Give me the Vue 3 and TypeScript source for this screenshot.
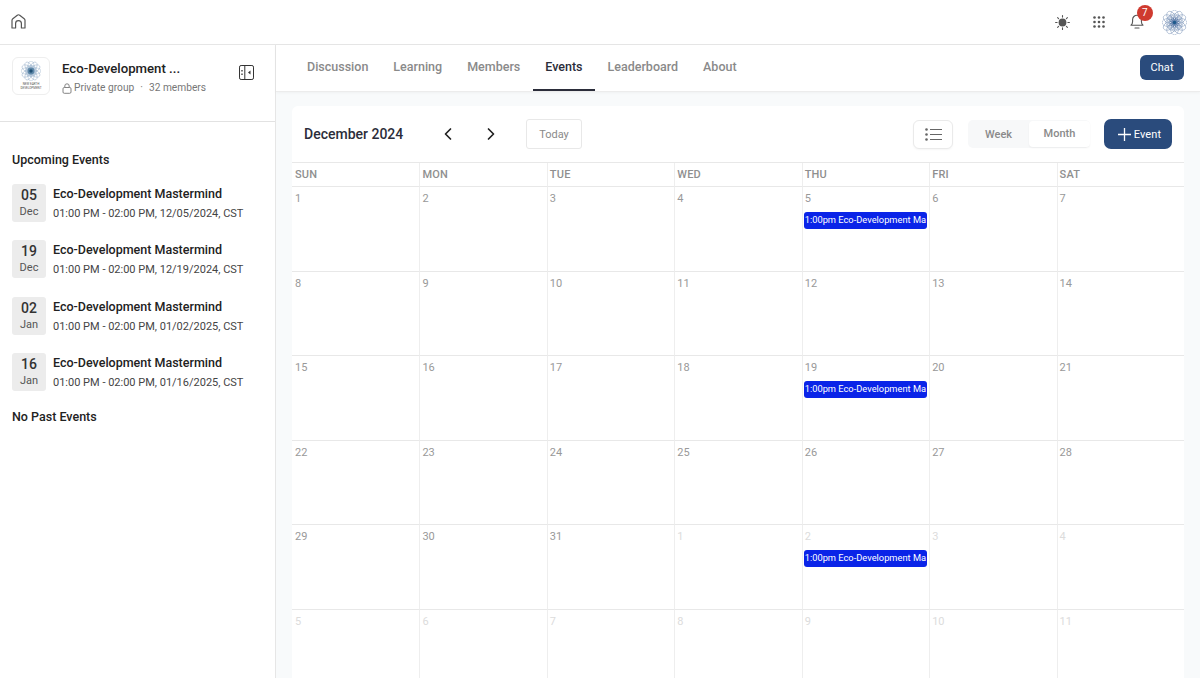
<script setup lang="ts">
const tabs = ['Discussion', 'Learning', 'Members', 'Events', 'Leaderboard', 'About']
const days = ['SUN', 'MON', 'TUE', 'WED', 'THU', 'FRI', 'SAT']
const events = [
  { d: '05', m: 'Dec', t: '01:00 PM - 02:00 PM, 12/05/2024, CST' },
  { d: '19', m: 'Dec', t: '01:00 PM - 02:00 PM, 12/19/2024, CST' },
  { d: '02', m: 'Jan', t: '01:00 PM - 02:00 PM, 01/02/2025, CST' },
  { d: '16', m: 'Jan', t: '01:00 PM - 02:00 PM, 01/16/2025, CST' },
]
interface Cell { n: number; muted: boolean; ev: boolean; key: string }
const cells: Cell[] = []
for (let i = 0; i < 42; i++) {
  const inDec = i < 31
  const n = inDec ? i + 1 : i - 30
  cells.push({ n, muted: !inDec, ev: i === 4 || i === 18 || i === 32, key: 'c' + i })
}
const petals = Array.from({ length: 12 }, (_, i) => i * 30)
</script>

<template>
  <div class="app">
    <header class="top">
      <svg class="home" width="15" height="15" viewBox="0 0 15 15" fill="none" stroke="#555" stroke-width="1.2" stroke-linejoin="round" stroke-linecap="round">
        <path d="M1 14V6.300q0-1 .8-1.600L6.300 1.200q1.200-.9 2.400 0l4.500 3.500q.8.600.8 1.600V14h-3.600V9.500a2.900 2.900 0 0 0-5.800 0V14z" />
      </svg>
      <div class="top-right">
        <svg width="15" height="15" viewBox="0 0 15 15" stroke="#555" stroke-width="1.100" stroke-linecap="round">
          <circle cx="7.500" cy="7.500" r="3.900" fill="#555" stroke="none" />
          <path d="M7.500.6v1.500M7.500 12.900v1.500M.6 7.500h1.500M12.900 7.500h1.500M2.600 2.600l1 1M11.400 11.400l1 1M2.600 12.400l1-1M11.400 3.600l1-1" />
        </svg>
        <svg class="grid-ic" width="12" height="12" viewBox="0 0 12 12" fill="#555">
          <circle cx="1.500" cy="1.500" r="1.300" /><circle cx="6" cy="1.500" r="1.300" /><circle cx="10.500" cy="1.500" r="1.300" />
          <circle cx="1.500" cy="6" r="1.300" /><circle cx="6" cy="6" r="1.300" /><circle cx="10.500" cy="6" r="1.300" />
          <circle cx="1.500" cy="10.500" r="1.300" /><circle cx="6" cy="10.500" r="1.300" /><circle cx="10.500" cy="10.500" r="1.300" />
        </svg>
        <div class="bell">
          <svg width="14" height="15" viewBox="0 0 14 15" fill="none" stroke="#555" stroke-width="1.100" stroke-linecap="round" stroke-linejoin="round">
            <path d="M1 11.200c1.100-.9 1.600-2 1.600-3.700V5.600a4.400 4.400 0 0 1 8.800 0v1.900c0 1.700.5 2.800 1.600 3.700z" />
            <path d="M5 14h4" />
          </svg>
          <span class="badge">7</span>
        </div>
        <svg class="avatar" width="25" height="25" viewBox="-13 -13 26 26" fill="none" stroke="#5b7ba8" stroke-width=".4">
          <ellipse v-for="p in petals" :key="p" cx="0" cy="-7" rx="4" ry="6" :transform="`rotate(${p})`" />
          <ellipse v-for="p in petals" :key="'m' + p" cx="0" cy="-4.500" rx="3" ry="4.500" :transform="`rotate(${p})`" />
          <ellipse v-for="p in petals" :key="'i' + p" cx="0" cy="-2.500" rx="1.600" ry="2.500" :transform="`rotate(${p})`" />
          <circle r="1.800" fill="#1f5a8c" stroke="none" />
        </svg>
      </div>
    </header>
    <div class="body">
      <aside class="side">
        <div class="group">
          <div class="logo">
            <svg width="20" height="20" viewBox="-13 -13 26 26" fill="none" stroke="#7f9dbd" stroke-width=".5">
              <circle r="8" fill="#cfdce8" stroke="none" />
              <ellipse v-for="p in petals" :key="p" cx="0" cy="-6.500" rx="4" ry="6.500" :transform="`rotate(${p})`" />
              <circle r="4.500" fill="#5d87a8" stroke="none" />
              <circle r="2.200" fill="#1f4f74" stroke="none" />
            </svg>
            <span class="logo-t">NEW EARTH<br />DEVELOPMENT</span>
          </div>
          <div class="g-info">
            <div class="g-name">Eco-Development ...</div>
            <div class="g-meta">
              <svg width="10" height="11" viewBox="0 0 10 11" fill="none" stroke="#777" stroke-width=".9">
                <rect x="1" y="4.500" width="8" height="5.800" rx="1.300" />
                <path d="M2.800 4.500V3a2.200 2.200 0 0 1 4.400 0v1.500" />
              </svg>
              <span>Private group</span><span class="dot">·</span><span>32 members</span>
            </div>
          </div>
          <svg class="collapse" width="15" height="15" viewBox="0 0 15 15" fill="none" stroke="#333" stroke-width="1">
            <rect x=".5" y=".5" width="14" height="14" rx="1.600" />
            <path d="M5.800.5v14" />
            <path d="M3 5v1.500M3 8.500V10" stroke-width="1.300" />
            <path d="M11.500 5.500v4L9 7.500z" fill="#333" stroke="none" />
          </svg>
        </div>
        <div class="list">
          <h3 class="list-h">Upcoming Events</h3>
          <div v-for="e in events" :key="e.t" class="ev">
            <div class="date"><b>{{ e.d }}</b><span>{{ e.m }}</span></div>
            <div class="ev-info">
              <div class="ev-name">Eco-Development Mastermind</div>
              <div class="ev-time">{{ e.t }}</div>
            </div>
          </div>
          <h3 class="list-h past">No Past Events</h3>
        </div>
      </aside>
      <main class="main">
        <nav class="tabs">
          <a v-for="t in tabs" :key="t" class="tab" :class="{ on: t === 'Events' }">{{ t }}</a>
          <button class="chat">Chat</button>
        </nav>
        <section class="content">
          <div class="card">
            <div class="bar">
              <div class="month">December 2024</div>
              <svg width="10" height="14" viewBox="0 0 10 14" fill="none" stroke="#222" stroke-width="1.700" stroke-linecap="round" stroke-linejoin="round"><path d="M7.500 2 2.500 7l5 5" /></svg>
              <svg class="nav-b" width="10" height="14" viewBox="0 0 10 14" fill="none" stroke="#222" stroke-width="1.700" stroke-linecap="round" stroke-linejoin="round"><path d="M2.500 2l5 5-5 5" /></svg>
              <button class="today">Today</button>
              <div class="spacer"></div>
              <button class="list-btn">
                <svg width="17" height="13" viewBox="0 0 17 13" stroke="#666" stroke-width="1.200" fill="#666">
                  <circle cx="1.500" cy="1.500" r="1.300" stroke="none" /><circle cx="1.500" cy="6.500" r="1.300" stroke="none" /><circle cx="1.500" cy="11.500" r="1.300" stroke="none" />
                  <path d="M5 1.500h12M5 6.500h12M5 11.500h12" />
                </svg>
              </button>
              <div class="seg">
                <span class="seg-a">Week</span>
                <span class="seg-b">Month</span>
              </div>
              <button class="add">
                <svg width="13" height="13" viewBox="0 0 13 13" stroke="#fff" stroke-width="1.300"><path d="M6.500 0v13M0 6.500h13" /></svg>
                <span>Event</span>
              </button>
            </div>
            <div class="cal">
              <div v-for="d in days" :key="d" class="dh">{{ d }}</div>
              <div v-for="c in cells" :key="c.key" class="cell">
                <span class="num" :class="{ muted: c.muted }">{{ c.n }}</span>
                <div v-if="c.ev" class="pill">1:00pm Eco-Development Ma</div>
              </div>
            </div>
          </div>
        </section>
      </main>
    </div>
  </div>
</template>

<style>
html, body { margin: 0; overflow: hidden; background: #fff; }
</style>

<style scoped>
.app { width: 1200px; height: 678px; overflow: hidden; display: flex; flex-direction: column; font-family: Roboto, "Liberation Sans", sans-serif; color: #222; }
.top { height: 45px; box-sizing: border-box; flex: none; border-bottom: 1px solid #e6e6e6; display: flex; align-items: center; padding: 0 13px 0 11px; }
.home { margin-top: -1px; }
.top-right { margin-left: auto; display: flex; align-items: center; }
.grid-ic { margin-left: 23.500px; }
.bell { position: relative; margin-left: 23.700px; height: 16px; width: 16px; display: flex; justify-content: center; }
.badge { position: absolute; left: 8px; top: -9px; width: 16px; height: 16px; border-radius: 50%; background: #cf3a2f; color: #fff; font-size: 10px; line-height: 16px; text-align: center; }
.avatar { margin-left: 17.300px; }
.body { flex: 1; display: flex; min-height: 0; }
.side { width: 276px; box-sizing: border-box; flex: none; border-right: 1px solid #e6e6e6; }
.group { height: 77px; box-sizing: border-box; border-bottom: 1px solid #e2e2e2; padding: 12px 21px 0 12px; display: flex; align-items: flex-start; }
.logo { width: 38px; height: 38px; box-sizing: border-box; border: 1px solid #eee; border-radius: 6px; display: flex; flex-direction: column; align-items: center; padding-top: 3px; flex: none; }
.logo-t { font-size: 3px; line-height: 3.500px; text-align: center; color: #555; margin-top: 2px; white-space: nowrap; }
.g-info { margin-left: 12px; flex: 1; }
.g-name { font-size: 13.200px; font-weight: 500; line-height: 20px; margin-top: 2px; }
.g-meta { display: flex; align-items: center; gap: 2px; font-size: 10.200px; color: #777; margin-top: 2px; line-height: 14px; }
.dot { margin: 0 4px; }
.collapse { margin-top: 8px; }
.list { padding: 29.500px 12px 0; }
.list-h { margin: 0; font-size: 12.500px; font-weight: 500; line-height: 16px; color: #222; }
.ev { display: flex; margin-top: 18.330px; height: 38px; }
.list-h + .ev { margin-top: 16.500px; }
.date { width: 34px; height: 38px; background: #ececec; border-radius: 3px; display: flex; flex-direction: column; align-items: center; flex: none; margin-right: 7px; }
.date b { font-size: 14px; font-weight: 500; line-height: 17px; margin-top: 3px; color: #333; }
.date span { font-size: 11px; line-height: 14px; color: #555; margin-top: 1px; }
.ev-name { font-size: 12.500px; font-weight: 500; line-height: 16px; color: #222; margin-top: 2px; }
.ev-time { font-size: 11px; line-height: 14px; color: #444; margin-top: 5px; }
.past { margin-top: 18.500px; }
.main { flex: 1; min-width: 0; display: flex; flex-direction: column; }
.tabs { height: 47px; flex: none; box-sizing: border-box; display: flex; align-items: flex-start; padding: 0 16px 0 18.500px; border-bottom: 1px solid #ececec; box-shadow: 0 1px 3px rgba(0, 0, 0, .04); position: relative; }
.tab { box-sizing: border-box; height: 46px; padding: 13px 12.500px 0; font-size: 12.500px; font-weight: 500; color: #8a8a8a; line-height: 18px; border-bottom: 2px solid transparent; }
.tab.on { color: #2b2d3a; border-bottom-color: #2b2d3a; }
.chat { margin: 10px 0 0 auto; width: 44px; height: 25px; border: none; border-radius: 6px; background: #2a4b7c; color: #fff; font: 400 11px Roboto, sans-serif; letter-spacing: .1px; padding: 0; }
.content { flex: 1; background: #f8fafb; padding: 14px 16px 0 16px; min-height: 0; }
.card { background: #fff; border-radius: 6px 6px 0 0; height: 100%; }
.bar { height: 56px; box-sizing: border-box; display: flex; align-items: center; padding: 0 12px; }
.month { font-size: 14px; font-weight: 500; color: #2b2d3a; width: 139px; }
.nav-b { margin-left: 33px; }
.today { margin-left: 30px; width: 56px; height: 30px; background: #fff; border: 1px solid #e8e8e8; border-radius: 3px; font: 11px Roboto, sans-serif; color: #8a8a8a; padding: 0; }
.spacer { flex: 1; }
.list-btn { width: 40px; height: 29px; background: #fff; border: 1px solid #eaeaea; border-radius: 6px; box-shadow: 0 1px 2px rgba(0, 0, 0, .04); display: flex; align-items: center; justify-content: center; padding: 0; }
.seg { margin-left: 15px; width: 122px; height: 28px; background: #f7f8f9; border-radius: 5px; display: flex; align-items: center; font-size: 11px; font-weight: 500; color: #8a8a8a; }
.seg-a { width: 61px; text-align: center; }
.seg-b { width: 61px; height: 26px; line-height: 26px; text-align: center; background: #fff; border-radius: 4px; box-shadow: 0 1px 2px rgba(0, 0, 0, .05); }
.add { margin-left: 14px; width: 68px; height: 30px; border: none; border-radius: 7px; background: #2a4b7c; color: #fff; display: flex; align-items: center; justify-content: center; gap: 3px; font: 400 11px Roboto, sans-serif; letter-spacing: .1px; padding: 0 0 0 3px; }
.cal { display: grid; grid-template-columns: repeat(7, minmax(0, 1fr)); grid-template-rows: 24px repeat(6, 84.500px); border-top: 1px solid #e8e8e8; }
.dh { box-sizing: border-box; border-bottom: 1px solid #e8e8e8; border-left: 1px solid #eee; padding: 5px 0 0 2px; font-size: 11px; font-weight: 500; color: #8f8f8f; line-height: 13px; letter-spacing: .2px; }
.cell { box-sizing: border-box; border-bottom: 1px solid #e8e8e8; border-left: 1px solid #eee; padding: 5px 2px 0 2px; min-width: 0; }
.dh:nth-child(7n + 1), .cell:nth-child(7n + 1) { border-left: none; padding-left: 3px; }
.num { display: block; font-size: 11px; line-height: 13px; color: #999; }
.num.muted { color: #dcdcdc; }
.pill { margin: 7px 0 0 -1px; height: 16.500px; box-sizing: border-box; background: #0a24e8; border-radius: 3px; color: #fff; font-size: 9.300px; line-height: 16.500px; padding-left: 1px; white-space: nowrap; overflow: hidden; }
</style>
